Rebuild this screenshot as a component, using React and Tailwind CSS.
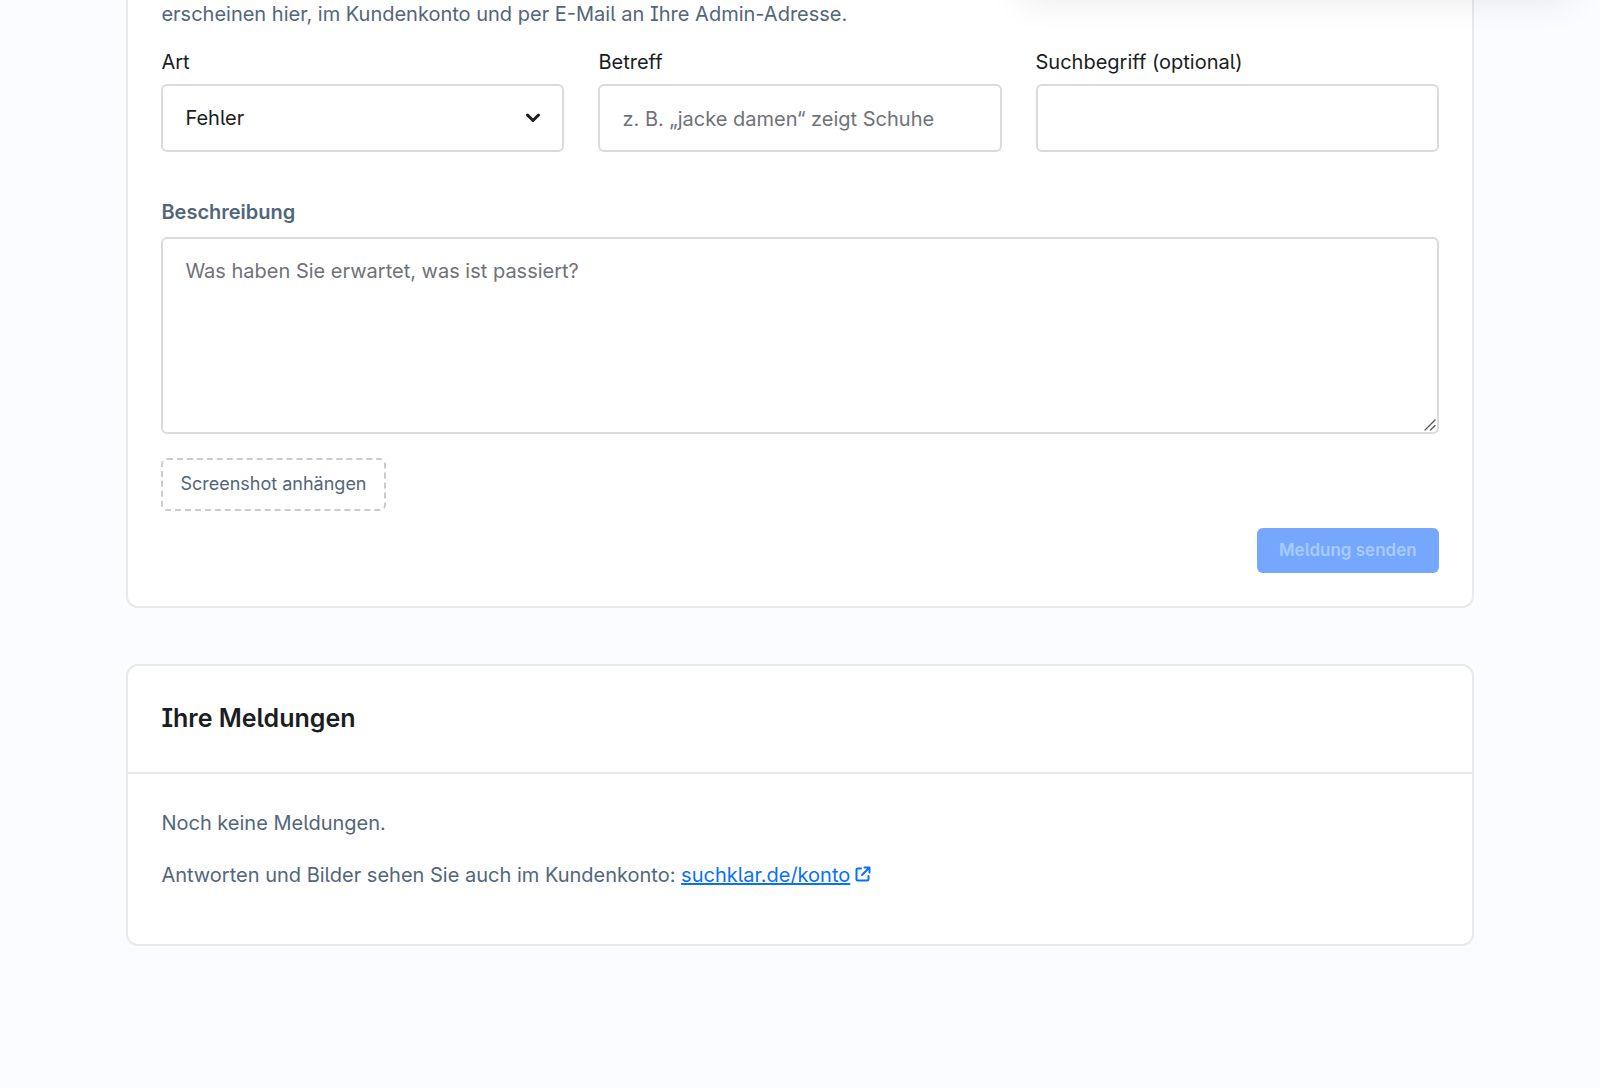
import { useId } from "react";

const control =
  "block w-full rounded-md border-2 border-[#d9dbdd] bg-white px-[22px] text-xl text-[#1a1d21] outline-none placeholder:text-[#6f7277] placeholder:opacity-100";

function Field({ label, children }) {
  const id = useId();
  return (
    <div>
      <label htmlFor={id} className="mb-2 block text-xl leading-7 text-[#1a1d21]">
        {label}
      </label>
      {children(id)}
    </div>
  );
}

function ExternalIcon() {
  return (
    <svg
      viewBox="0 0 16 16"
      className="ml-[5px] inline-block size-4 align-baseline"
      fill="none"
      stroke="currentColor"
      strokeWidth="2"
      strokeLinecap="round"
      strokeLinejoin="round"
      aria-hidden="true"
    >
      <path d="M6 2.5H3A1.5 1.5 0 0 0 1.500 4v9A1.500 1.500 0 0 0 3 14.500h9a1.500 1.500 0 0 0 1.500-1.500v-3" />
      <path d="M9.500 1.500h5v5M14.200 1.800 7 9" />
    </svg>
  );
}

export default function App() {
  return (
    <div className="relative min-h-screen overflow-hidden bg-[#fbfcff] px-[7.9%] font-['Inter',sans-serif] text-[#52667a] [font-feature-settings:'ss02']">
      <section className="rounded-b-xl border-2 border-t-0 border-[#e7e9eb] bg-white px-[33px] pb-[33px]">
        <p className="text-xl leading-7">
          erscheinen hier, im Kundenkonto und per E-Mail an Ihre Admin-Adresse.
        </p>

        <div className="mt-5 grid grid-cols-3 gap-[34px]">
          <Field label="Art">
            {(id) => (
              <div className="relative">
                <select id={id} className={`${control} h-[68px] appearance-none`}>
                  <option>Fehler</option>
                </select>
                <svg
                  viewBox="0 0 16 10"
                  className="pointer-events-none absolute top-[29px] right-[23px] h-[10px] w-4"
                  fill="none"
                  stroke="#1a1d21"
                  strokeWidth="3"
                  strokeLinecap="round"
                  strokeLinejoin="round"
                  aria-hidden="true"
                >
                  <path d="M2.500 2 8 7.500 13.500 2" />
                </svg>
              </div>
            )}
          </Field>
          <Field label="Betreff">
            {(id) => (
              <input
                id={id}
                type="text"
                placeholder="z. B. „jacke damen“ zeigt Schuhe"
                className={`${control} h-[68px] pt-[2px]`}
              />
            )}
          </Field>
          <Field label="Suchbegriff (optional)">
            {(id) => <input id={id} type="text" className={`${control} h-[68px] pt-[2px]`} />}
          </Field>
        </div>

        <label htmlFor="beschreibung" className="mt-[46px] mb-[11px] block text-xl leading-7 font-semibold">
          Beschreibung
        </label>
        <div className="relative">
          <textarea
            id="beschreibung"
            placeholder="Was haben Sie erwartet, was ist passiert?"
            className={`${control} h-[197px] resize-none py-[18px] leading-7`}
          />
          <svg
            viewBox="0 0 12 12"
            className="pointer-events-none absolute right-[3px] bottom-[3px] size-3"
            stroke="#55585c"
            strokeWidth="1.3"
            strokeLinecap="round"
            aria-hidden="true"
          >
            <path d="M1 11 11 1M6.500 11 11 6.500" />
          </svg>
        </div>

        <button
          type="button"
          className="mt-6 block h-[53px] rounded-md border-2 border-dashed border-[#c8ccd0] px-[17px] pb-[2px] text-lg"
        >
          Screenshot anhängen
        </button>
        <div className="mt-[17px] flex justify-end">
          <button
            type="button"
            disabled
            className="h-[45px] rounded-md bg-[#75a7ff] px-[22px] text-[17px] font-semibold text-[#a8ccff]"
          >
            Meldung senden
          </button>
        </div>
      </section>

      <section className="mt-14 rounded-xl border-2 border-[#e7e9eb] bg-white">
        <h2 className="border-b-2 border-[#e7e9eb] px-[33px] pt-[34px] pb-9 text-[25px] leading-9 font-semibold text-[#1a1d21]">
          Ihre Meldungen
        </h2>
        <div className="px-[33px] pt-[35px] pb-[55px] text-xl leading-7">
          <p>Noch keine Meldungen.</p>
          <p className="mt-6">
            Antworten und Bilder sehen Sie auch im Kundenkonto:{" "}
            <a href="#konto" className="text-[#0870ff]">
              <span className="underline">suchklar.de/konto</span>
              <ExternalIcon />
            </a>
          </p>
        </div>
      </section>

      <div className="pointer-events-none absolute -top-11 right-7 h-10 w-[552px] rounded-lg shadow-[0_4px_36px_rgba(0,0,0,0.09)]" />
    </div>
  );
}
